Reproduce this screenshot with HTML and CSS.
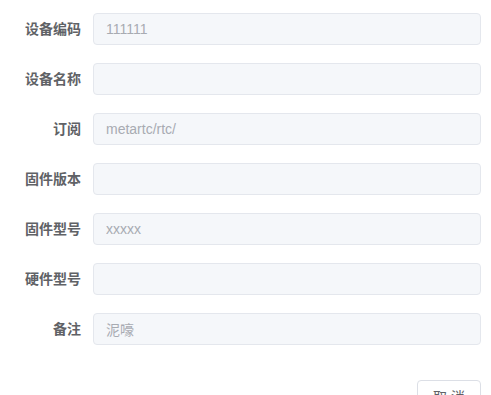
FILE: index.html
```html
<!DOCTYPE html>
<html lang="zh-CN">
<head>
    <meta charset="UTF-8">
    <title>设备信息</title>
    <link rel="stylesheet" href="styles.css">
</head>
<body>
    <form class="device-form">
        <div class="form-item">
            <label class="form-label">设备编码</label>
            <div class="form-content"><input class="form-input" type="text" value="111111" disabled></div>
        </div>
        <div class="form-item">
            <label class="form-label">设备名称</label>
            <div class="form-content"><input class="form-input" type="text" value="" disabled></div>
        </div>
        <div class="form-item">
            <label class="form-label">订阅</label>
            <div class="form-content"><input class="form-input" type="text" value="metartc/rtc/" disabled></div>
        </div>
        <div class="form-item">
            <label class="form-label">固件版本</label>
            <div class="form-content"><input class="form-input" type="text" value="" disabled></div>
        </div>
        <div class="form-item">
            <label class="form-label">固件型号</label>
            <div class="form-content"><input class="form-input" type="text" value="xxxxx" disabled></div>
        </div>
        <div class="form-item">
            <label class="form-label">硬件型号</label>
            <div class="form-content"><input class="form-input" type="text" value="" disabled></div>
        </div>
        <div class="form-item">
            <label class="form-label">备注</label>
            <div class="form-content"><input class="form-input" type="text" value="泥嚎" disabled></div>
        </div>
    </form>
    <div class="dialog-footer">
        <button class="btn" type="button">取 消</button>
    </div>
</body>
</html>
```

FILE: styles.css
```css
body {
    margin: 0;
    background-color: #fff;
    font-family: 'Liberation Sans', 'Noto Sans CJK SC', sans-serif;
    font-size: 14px;
    overflow: hidden;
}
.device-form {
    padding: 13px 10px 0 0;
}
.form-item {
    display: flex;
    align-items: center;
    margin-bottom: 18px;
}
.form-label {
    width: 93px;
    box-sizing: border-box;
    padding-right: 12px;
    text-align: right;
    color: #606266;
    font-weight: bold;
    line-height: 32px;
}
.form-content {
    flex: 1;
}
.form-input {
    display: block;
    width: 100%;
    height: 32px;
    box-sizing: border-box;
    padding: 0 12px;
    border: 1px solid #e4e7ed;
    border-radius: 4px;
    background-color: #f5f7fa;
    color: #a8abb2;
    font-family: inherit;
    font-size: 14px;
    outline: none;
}
.dialog-footer {
    display: flex;
    justify-content: flex-end;
    padding: 17px 10px 0 0;
}
.btn {
    height: 32px;
    padding: 0 15px;
    border: 1px solid #dcdfe6;
    border-radius: 4px;
    background-color: #fff;
    color: #606266;
    font-family: inherit;
    font-size: 14px;
}
```
